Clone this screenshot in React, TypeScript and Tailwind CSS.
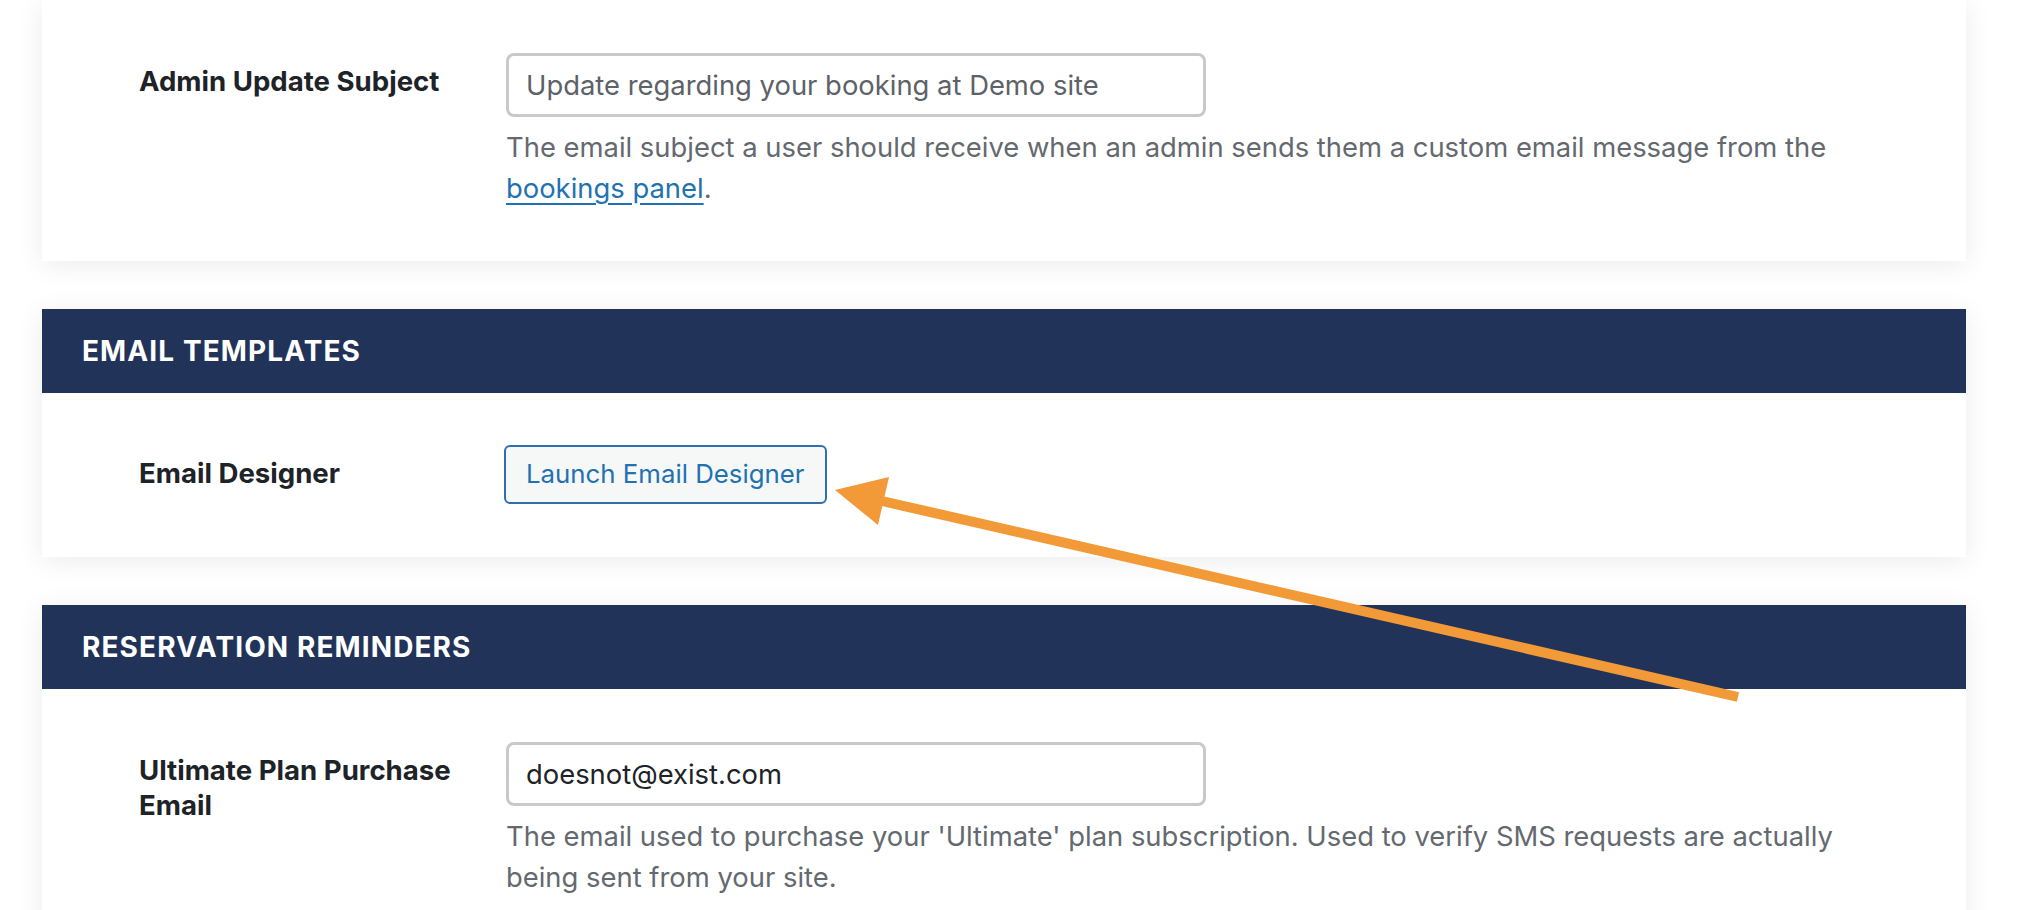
import React from 'react'

const font = "font-['Inter','Liberation_Sans',sans-serif]"

function SectionHeader({ title }: { title: string }) {
    return (
        <div className="h-[84px] bg-[#213359] px-[40px] flex items-center">
            <h2 className="text-[28px] font-bold text-white uppercase leading-none tracking-[1.1px]">{title}</h2>
        </div>
    )
}

function Label({ children }: { children: React.ReactNode }) {
    return (
        <div className="pt-[11px] pr-[10px] text-[27.6px] leading-[35px] font-bold text-[#1d2327]">
            {children}
        </div>
    )
}

function TextInput({ value, muted }: { value: string; muted?: boolean }) {
    return (
        <input
            readOnly
            defaultValue={value}
            className={`w-[700px] h-[64px] border-[3px] border-[#c9c9c9] rounded-[8px] px-[17px] text-[27.4px] bg-white outline-none ${
                muted ? 'text-[#5d6168]' : 'text-[#1d2327]'
            }`}
        />
    )
}

export default function App() {
    return (
        <div className={`relative w-full h-[910px] overflow-hidden bg-white ${font}`}>
            <div className="pl-[42px] pr-[54px] flex flex-col gap-[48px]">
                {/* Admin subject card */}
                <div className="bg-white shadow-[0_4px_26px_rgba(0,0,0,0.08)]">
                    <div className="grid grid-cols-[367px_1fr] pl-[97px] pr-[60px] pt-[53px] pb-[52px]">
                        <Label>Admin Update Subject</Label>
                        <div>
                            <TextInput value="Update regarding your booking at Demo site" muted />
                            <p className="mt-[10px] text-[27.4px] leading-[41px] text-[#646970]">
                                The email subject a user should receive when an admin sends them a custom email message from the
                                <br />
                                <a href="#" className="text-[#2271b1] underline underline-offset-[5px]">
                                    bookings panel
                                </a>
                                .
                            </p>
                        </div>
                    </div>
                </div>

                {/* Email templates */}
                <div className="bg-white shadow-[0_4px_26px_rgba(0,0,0,0.08)]">
                    <SectionHeader title="Email Templates" />
                    <div className="grid grid-cols-[365px_1fr] pl-[97px] pr-[60px] pt-[52px] pb-[53px]">
                        <Label>Email Designer</Label>
                        <div>
                            <button className="h-[59px] px-[20px] border-2 border-[#2f6fb0] rounded-[6px] bg-[#f6f7f7] text-[25.8px] text-[#2271b1]">
                                Launch Email Designer
                            </button>
                        </div>
                    </div>
                </div>

                {/* Reservation reminders */}
                <div className="bg-white shadow-[0_4px_26px_rgba(0,0,0,0.08)]">
                    <SectionHeader title="Reservation Reminders" />
                    <div className="grid grid-cols-[367px_1fr] pl-[97px] pr-[60px] pt-[53px] pb-[60px]">
                        <Label>
                            Ultimate Plan Purchase
                            <br />
                            Email
                        </Label>
                        <div>
                            <TextInput value="doesnot@exist.com" />
                            <p className="mt-[10px] text-[27.4px] leading-[41px] text-[#646970]">
                                The email used to purchase your 'Ultimate' plan subscription. Used to verify SMS requests are actually
                                <br />
                                being sent from your site.
                            </p>
                        </div>
                    </div>
                </div>
            </div>

            {/* annotation arrow */}
            <svg
                className="absolute top-0 left-0 pointer-events-none"
                width={2020}
                height={910}
                viewBox="0 0 2020 910"
            >
                <line x1={1738} y1={697} x2={882} y2={501} stroke="#f29a37" strokeWidth={10} />
                <polygon points="835,490 889,477 878,525" fill="#f29a37" />
            </svg>
        </div>
    )
}
